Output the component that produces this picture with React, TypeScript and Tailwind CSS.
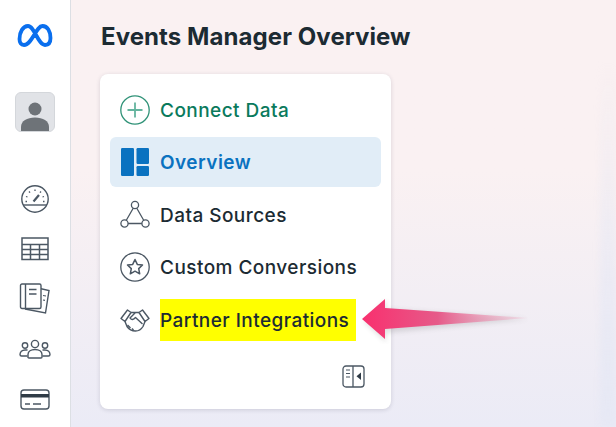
import React from "react";

const S = "#4b5763";

function Meta() {
  return (
    <svg width="38" height="28" viewBox="0 0 38 28" fill="none">
      <path d="M3.500 17C3.500 10 7 4 12 4C18.500 4 22 23 29 23C32.500 23 34.500 20.500 34.500 16C34.500 9.500 31.500 4 26.500 4C20 4 16 23 8 23C5 23 3.500 20.500 3.500 17Z" stroke="#0a6fee" strokeWidth="3.800" strokeLinejoin="round" />
    </svg>
  );
}

function Gauge() {
  return (
    <svg width="30" height="30" viewBox="0 0 30 30" fill="none" stroke={S} strokeWidth="1.400">
      <circle cx="15" cy="15" r="13.200" />
      <path d="M3 21H27" />
      <path d="M13.500 17.500L19 11" strokeWidth="2.200" />
      <path d="M15 5.500v1.500M9 7.500l1 1.200M21 7.500l-1 1.200M6 12.500l1.500.5M24 12.500l-1.500.5M5.500 17.500H7M23 17.500h1.500" strokeWidth="1.300" />
    </svg>
  );
}

function TableIcon() {
  return (
    <svg width="28" height="24" viewBox="0 0 28 24" fill="none" stroke={S} strokeWidth="1.500">
      <rect x="1" y="1" width="26" height="21.500" />
      <path d="M1 7.500H27M1 12.500H27M1 17.500H27M9.500 7.500V22.500M18.500 7.500V22.500" />
    </svg>
  );
}

function Docs() {
  return (
    <svg width="32" height="32" viewBox="0 0 32 32" fill="none" stroke={S} strokeWidth="1.400">
      <path d="M21 5.500L30 7.500L26.500 30L6 26" />
      <rect x="1.500" y="1" width="20.500" height="24.500" rx="1.500" fill="#fff" />
      <path d="M6.500 1V25.500M10 6.500H17.500M10 11H17.500" />
      <path d="M24 12.500l3 .5M24 17l2 .4" strokeWidth="1.100" />
    </svg>
  );
}

function People() {
  return (
    <svg width="32" height="20" viewBox="0 0 32 20" fill="none" stroke={S} strokeWidth="1.400">
      <circle cx="16" cy="5" r="3.600" />
      <circle cx="6" cy="6.500" r="2.700" />
      <circle cx="26" cy="6.500" r="2.700" />
      <path d="M9 18.500V15.500C9 12.500 12 10.500 16 10.500C20 10.500 23 12.500 23 15.500V18C23 18.500 22.500 19 22 19H10C9.500 19 9 18.500 9 18.500Z" />
      <path d="M8.500 11H6C3 11 1 13 1 15.500C1 16.500 1.500 17 2.500 17H8.500M23.500 11H26C29 11 31 13 31 15.500C31 16.500 30.500 17 29.500 17H23.500" />
    </svg>
  );
}

function Card() {
  return (
    <svg width="30" height="21" viewBox="0 0 30 21" fill="none" stroke={S} strokeWidth="1.400">
      <rect x="1" y="1" width="28" height="19" rx="3" />
      <rect x="1" y="5" width="28" height="3.500" fill="#2f3b46" stroke="none" />
      <path d="M5 15H10M13 15H21" />
    </svg>
  );
}

function Plus() {
  return (
    <svg width="30" height="30" viewBox="0 0 30 30" fill="none" stroke="#2f9277" strokeWidth="1.300">
      <circle cx="15" cy="15" r="14.200" />
      <path d="M15 7.500V22.500M7.500 15H22.500" strokeWidth="1.800" stroke="#64b49e" />
    </svg>
  );
}

function Layout() {
  return (
    <svg width="28" height="28" viewBox="0 0 28 28" fill="#0a72c0">
      <rect x="0" y="0" width="13" height="28" rx="1.200" />
      <rect x="15.500" y="0" width="12.500" height="16" rx="1.200" />
      <rect x="15.500" y="18" width="12.500" height="10" rx="1.200" />
    </svg>
  );
}

function Nodes() {
  return (
    <svg width="30" height="30" viewBox="0 0 30 30" fill="none" stroke={S} strokeWidth="1.300">
      <circle cx="15" cy="5" r="3.600" />
      <circle cx="4.500" cy="23.500" r="3.600" />
      <circle cx="25.500" cy="23.500" r="3.600" />
      <path d="M13.200 8.200L6.300 20.300M16.800 8.200L23.700 20.300M8.100 23.500H21.900" />
    </svg>
  );
}

function Star() {
  return (
    <svg width="30" height="30" viewBox="0 0 30 30" fill="none" stroke={S} strokeWidth="1.300">
      <circle cx="15" cy="15" r="14.200" />
      <path d="M15 7.500L17.300 12.400L22.500 13L18.700 16.600L19.700 21.800L15 19.200L10.300 21.800L11.300 16.600L7.500 13L12.700 12.400Z" strokeLinejoin="round" strokeWidth="1.500" />
    </svg>
  );
}

function Shake() {
  return (
    <svg width="30" height="24" viewBox="0 0 30 24" fill="none" stroke={S} strokeWidth="1.400" strokeLinejoin="round">
      <path d="M1 10.500L7.500 2L11 4.500L5 13.500Z" />
      <path d="M29 10.500L22.500 2L19 4.500L25 13.500Z" />
      <path d="M11 4.500H15.500M19 4.500H15.500L10 10C11 12 13.500 12 15.500 9.500L22.500 16" />
      <path d="M5 13.500L7 18.500C9 21.500 12.500 23 15.500 23C19 23 21.500 21 23 18.500L25 13.500" />
      <path d="M7.500 17l3 3M12 20.500l1.500 1.500" />
    </svg>
  );
}

function Collapse() {
  return (
    <svg width="23" height="23" viewBox="0 0 23 23" fill="none" stroke={S} strokeWidth="1.300">
      <rect x="1" y="1" width="21" height="21" rx="3" />
      <path d="M11 1V22" />
      <path d="M4 5H8M4 8.500H8M4 12H8" strokeWidth="1.100" />
      <path d="M19 7.500V15L14.500 11.300Z" fill="#2f3b46" stroke="none" />
    </svg>
  );
}

function Item({ icon, children, className = "", labelClass = "pt-[2px]" }: { icon: React.ReactNode; children: React.ReactNode; className?: string; labelClass?: string }) {
  return (
    <div className={`flex h-[50px] items-center rounded-md px-[10px] ${className}`}>
      <span className="flex w-[30px] shrink-0 justify-center">{icon}</span>
      <span className={`ml-[10px] text-[19px] tracking-[0.45px] ${labelClass}`}>{children}</span>
    </div>
  );
}

function Rail({ children }: { children: React.ReactNode }) {
  return <div className="flex h-[50px] w-full items-center justify-center">{children}</div>;
}

export default function App() {
  return (
    <div
      className="relative flex h-[427px] w-[616px] overflow-hidden bg-gradient-to-b from-[#faf1f2] from-40% to-[#ebebf6] text-[#1c2b33]"
      style={{ fontFamily: '"Inter", "Liberation Sans", sans-serif' }}
    >
      <aside className="flex h-full w-[71px] shrink-0 flex-col items-center border-r border-[#dcdfe4] bg-white pt-[22px]">
        <Meta />
        <div className="mt-[42px] flex h-[40px] w-[40px] shrink-0 items-end justify-center overflow-hidden rounded-md border border-[#d4d7db] bg-[#e1e3e7]">
          <svg width="28" height="31" viewBox="0 0 28 31" fill="#6e7378">
            <circle cx="14" cy="9" r="6.500" />
            <path d="M0 31V27C0 21 6 17.500 14 17.500C22 17.500 28 21 28 27V31Z" />
          </svg>
        </div>
        <div className="mt-[42px] flex w-full flex-col items-center">
          <Rail><Gauge /></Rail>
          <Rail><TableIcon /></Rail>
          <Rail><Docs /></Rail>
          <Rail><People /></Rail>
          <Rail><Card /></Rail>
        </div>
      </aside>

      <main className="flex flex-1 flex-col pl-[29px] pt-[22px]">
        <h1 className="pl-[1px] text-[24px] font-bold leading-[30px] tracking-[0.08px]">Events Manager Overview</h1>
        <section className="mt-[22px] flex h-[335px] w-[291px] flex-col rounded-lg bg-white px-[10px] pt-[11px] shadow-[0_1px_4px_rgba(40,40,70,0.16)]">
          <Item icon={<Plus />}>
            <span className="font-medium text-[#0a7a5c]">Connect Data</span>
          </Item>
          <Item icon={<Layout />} className="mt-[2px] bg-[#e1edf7]">
            <span className="font-semibold text-[#0a72c0]">Overview</span>
          </Item>
          <Item icon={<Nodes />} className="mt-[3px]">
            <span className="font-medium">Data Sources</span>
          </Item>
          <Item icon={<Star />} className="mt-[2px]">
            <span className="font-medium">Custom Conversions</span>
          </Item>
          <Item icon={<Shake />} className="mt-[3px]" labelClass="">
            <span className="flex h-[42px] w-[196px] items-center bg-[#ffff00] pt-[2px] font-medium">Partner Integrations</span>
          </Item>
          <div className="mt-[20px] flex justify-end pr-[16px]">
            <Collapse />
          </div>
        </section>
      </main>

      <div className="absolute right-0 top-[60px] h-[367px] w-[16px] bg-gradient-to-b from-[#f9f0f1]/0 to-[#e6e8f4] blur-[3px]" />

      <svg className="absolute left-[360px] top-[298px]" width="172" height="46" viewBox="0 0 172 46" fill="none">
        <defs>
          <linearGradient id="a" x1="4" y1="0" x2="168" y2="0" gradientUnits="userSpaceOnUse">
            <stop offset="0" stopColor="#f8316f" />
            <stop offset="0.45" stopColor="#e65a89" />
            <stop offset="1" stopColor="#f4a8c2" stopOpacity="0.2" />
          </linearGradient>
          <filter id="b" x="-10%" y="-30%" width="120%" height="180%">
            <feGaussianBlur stdDeviation="2.500" />
          </filter>
        </defs>
        <path d="M4 22L26 0V9L168 19L26 33V42Z" transform="translate(0,2)" fill="#555" opacity="0.18" filter="url(#b)" />
        <path d="M2 21L25 1L25 10L168 20L25 31L25 41Z" fill="url(#a)" />
      </svg>
    </div>
  );
}
